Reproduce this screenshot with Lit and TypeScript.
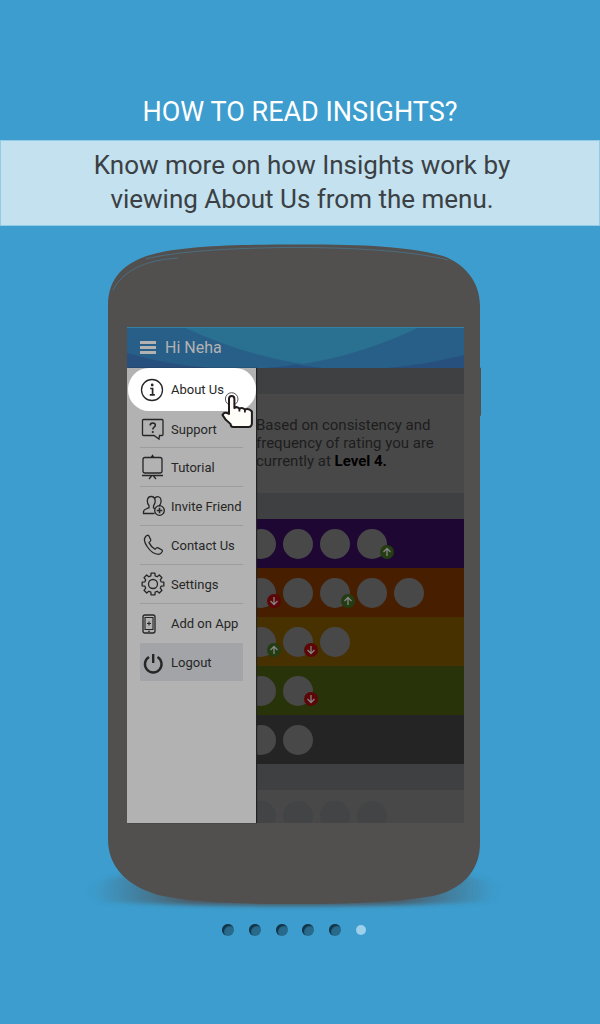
import { LitElement, html, css, svg } from "lit";
import { customElement } from "lit/decorators.js";

// Outline of a cog with eight blunt teeth around (13, 14).
const cog = (() => {
  const points: string[] = [];
  for (let tooth = 0; tooth < 8; tooth++) {
    for (const [radius, offset] of [[8.4, -15], [11, -10], [11, 10], [8.4, 15]]) {
      const angle = ((tooth * 45 + offset) * Math.PI) / 180;
      points.push(`${(13 + radius * Math.cos(angle)).toFixed(2)} ${(14 + radius * Math.sin(angle)).toFixed(2)}`);
    }
  }
  return `M${points.join("L")}Z`;
})();

const icons = {
  info: svg`<circle cx="12" cy="14" r="10.5"/><path d="M10.200 12.500h2.400v6M9.800 18.800h5" stroke-width="1.7"/><circle cx="12.200" cy="9" r="1.400" fill="currentColor" stroke="none"/>`,
  support: svg`<path d="M3.500 4.500h18.500q1 0 1 1v14q0 1-1 1h-2.500l-.5 3.500-5-3.500H3.500q-1 0-1-1v-14q0-1 1-1z"/><path d="M10.200 10.500q0-2.500 2.600-2.500t2.500 2.300q0 1.300-1.400 2.100-1.100.7-1.100 2.200" stroke-width="1.600"/><circle cx="12.800" cy="17" r="1.100" fill="currentColor" stroke="none"/>`,
  tutorial: svg`<rect x="3" y="4.500" width="19" height="15.500" rx="2"/><path d="M2 22.500h21M11.500 23L9 26M13.500 23l2.500 3M11.500 4l1-1.500 1 1.500z"/>`,
  invite: svg`<path d="M14.500 6.500q2-2.500 4.500-1.500 2.500 1 2 5-.3 2-1.500 3.500v1M14.500 21.500H3.500q-.5-3.500 2.500-4.500l3-1.300v-2.200Q7.300 11.500 7.300 9 7.500 4.500 11.200 4.500t4 4.500q0 2.700-1.700 4.900v2l1.500.8"/><circle cx="19.500" cy="18.500" r="4.800"/><path d="M19.500 15.700v5.600M16.700 18.500h5.600" stroke-width="1.600"/>`,
  contact: svg`<path d="M4.500 7.500q1-2.800 3.300-3.300l1 .5 2 4.300q.2 1-1.800 2.600 2 4.200 6 6.600 1.700-1.900 2.700-1.600l4.300 2.400q.6.600.3 1.500-1.200 2.400-3.600 2.800Q12 23 7.500 16 4 11 4.500 7.500z"/>`,
  settings: svg`<circle cx="13" cy="14" r="4.500"/><path d=${cog} stroke-linejoin="round"/>`,
  add: svg`<rect x="3" y="5" width="12" height="18" rx="2"/><path d="M5 7.500h8v12H5zM9 11.500v4M7 13.500h4M8 21.300h2" stroke-width="1.100"/>`,
  logout: svg`<path d="M9 9a8.300 8.300 0 1 0 8.500 0M13.200 6v9" stroke-width="2.400"/>`,
};

const items: { id: keyof typeof icons; label: string }[] = [
  { id: "info", label: "About Us" },
  { id: "support", label: "Support" },
  { id: "tutorial", label: "Tutorial" },
  { id: "invite", label: "Invite Friend" },
  { id: "contact", label: "Contact Us" },
  { id: "settings", label: "Settings" },
  { id: "add", label: "Add on App" },
  { id: "logout", label: "Logout" },
];

const levels: { tone: string; marks: string[] }[] = [
  { tone: "violet", marks: ["", "", "", "up"] },
  { tone: "orange", marks: ["down", "", "up", "", ""] },
  { tone: "amber", marks: ["up", "down", ""] },
  { tone: "green", marks: ["", "down"] },
  { tone: "grey", marks: ["", ""] },
];

@customElement("app-root")
export class AppRoot extends LitElement {
  static styles = css`
    :host {
      display: block;
      min-height: 100vh;
      background: #3c9dce;
      font-family: Roboto, "Liberation Sans", sans-serif;
    }
    * { box-sizing: border-box; }
    .page { display: flex; flex-direction: column; align-items: center; padding-top: 94px; }
    h1 { margin: 0 0 10px; font-size: 27px; line-height: 36px; font-weight: 400; color: #fff; text-align: center; }
    .banner {
      width: 100%;
      padding: 7px 14px 9px 18px;
      border: 1px solid #93cbe6;
      background: #c3e1ef;
      color: #3b4044;
      text-align: center;
    }
    .banner p { max-width: 440px; margin: 0 auto; font-size: 26px; line-height: 34px; }
    .phone {
      position: relative;
      width: 62%;
      min-width: 373px;
      margin: 18px 11px 0 0;
      padding: 83px 17px 82px 19px;
    }
    .shell { position: absolute; inset: 0; width: 100%; height: 100%; overflow: visible; }
    .screen { position: relative; background: #484848; }
    .bar {
      position: relative;
      display: flex;
      align-items: center;
      gap: 9px;
      height: 41px;
      padding-left: 13px;
      background: #27507f;
      color: #b2b2b2;
      font-size: 16px;
    }
    .waves { position: absolute; inset: 0; width: 100%; height: 100%; }
    .burger { position: relative; display: grid; width: 16px; padding: 0; border: 0; background: none; gap: 2px; }
    .burger i { height: 3px; background: #b2b2b2; }
    .hello { position: relative; }
    .body { display: grid; grid-template-columns: 129px minmax(0, 1fr); }
    .drawer { position: relative; z-index: 1; background: #b2b2b2; box-shadow: 1px 0 1px #222; }
    .item {
      display: flex;
      align-items: center;
      gap: 5px;
      height: 39px;
      margin: 0 13px;
      border-bottom: 1px solid #9c9c9c;
      color: #262626;
      font-size: 13px;
      white-space: nowrap;
      text-decoration: none;
    }
    .icon { flex: none; width: 26px; height: 28px; fill: none; stroke: currentColor; stroke-width: 1.3; }
    .info { position: relative; height: 43px; margin: 0 0 0 1px; padding: 0 12px; border: 0; border-radius: 21px; background: #fff; }
    .support { height: 37px; }
    .add { border: 0; }
    .logout { height: 38px; border: 0; background: #a2a4a8; }
    .cursor { position: absolute; left: 92px; top: 22px; width: 36px; height: 42px; overflow: visible; }
    .content { display: flex; flex-direction: column; overflow: hidden; }
    .strip { height: 26px; background: #3f4041; }
    .note { margin: 0; padding: 22px 0 23px; color: #1d1d1d; font-size: 15px; line-height: 18px; white-space: nowrap; }
    .note b { color: #000; font-weight: 700; }
    .level { display: flex; align-items: center; gap: 7px; height: 49px; }
    .violet { background: #1e0833; }
    .orange { background: #481e00; }
    .amber { background: #483100; }
    .green { background: #29330a; }
    .grey { background: #242424; }
    .disc { position: relative; flex: none; width: 30px; height: 30px; border-radius: 50%; background: #484848; }
    .disc:first-child { margin-left: -10px; }
    .badge { position: absolute; right: -5px; bottom: 0; width: 14px; height: 14px; }
    .violet .badge { right: -7px; }
    .more { display: flex; gap: 7px; height: 33px; padding-top: 11px; overflow: hidden; }
    .more .disc { background: #424446; }
    .dots { display: flex; align-items: center; justify-content: space-between; width: 144px; margin: 19px 12px 0 0; }
    .dot { width: 12px; height: 12px; padding: 0; border: 0; border-radius: 50%; background: #286a8c; box-shadow: inset 2px 2px 1px #123548; }
    .current { width: 10px; height: 10px; background: #9dd0ea; box-shadow: none; }
  `;

  private disc(mark: string) {
    return html`<span class="disc">${mark
      ? html`<svg class="badge" viewBox="0 0 14 14" role="img" aria-label=${mark}>
          <circle cx="7" cy="7" r="7" fill=${mark === "up" ? "#243c12" : "#5c0608"}/>
          <path d=${mark === "up" ? "M7 11V3.500M3.500 7L7 3.500 10.500 7" : "M7 3v7.500M3.500 7L7 10.500 10.500 7"} fill="none" stroke="#858585" stroke-width="1.300"/>
        </svg>`
      : ""}</span>`;
  }

  render() {
    return html`<main class="page">
      <h1>HOW TO READ INSIGHTS?</h1>
      <section class="banner"><p>Know more on how Insights work by viewing About Us from the menu.</p></section>
      <section class="phone">
        <svg class="shell" viewBox="0 0 373 662" preserveAspectRatio="none" aria-hidden="true">
          <defs>
            <linearGradient id="fade"><stop offset="0" stop-color="#4b5c66" stop-opacity="0"/><stop offset=".25" stop-color="#4b5c66"/><stop offset=".75" stop-color="#4b5c66"/><stop offset="1" stop-color="#4b5c66" stop-opacity="0"/></linearGradient>
            <filter id="soft" x="-10%" y="-60%" width="120%" height="220%"><feGaussianBlur stdDeviation="6 2"/></filter>
          </defs>
          <path d="M-16 645Q0 634 20 632H352Q375 634 388 645L380 659Q290 663 186 663T-8 659Z" fill="url(#fade)" filter="url(#soft)"/>
          <path d="M0 62C0 34 16 19 42 11C76 1 140 .5 187 .5C240 .5 295 1 335 12C357 20 372 38 372 62V124H373V172H372V600C372 630 352 647 325 653C285 660 235 661 186 661C137 661 87 660 50 652C20 643 0 625 0 596Z" fill="#524f4f"/>
          <path d="M5 46Q20 17 70 14M38 15C90 1 270-2 340 16" fill="none" stroke="#47758c" stroke-width=".8"/>
        </svg>
        <div class="screen">
          <header class="bar">
            <svg class="waves" viewBox="0 0 337 41" preserveAspectRatio="none" aria-hidden="true">
              <path d="M0 0V26C90 52 190 48 293 0ZM56 0C150 48 240 52 337 28V0Z" fill="#285f88"/>
              <path d="M56 0Q116 28 176 37Q234 28 293 0Z" fill="#2a7091"/>
              <path d="M0 .5H337" stroke="#347fa5"/>
            </svg>
            <button class="burger" aria-label="Menu"><i></i><i></i><i></i></button>
            <span class="hello">Hi Neha</span>
          </header>
          <div class="body">
            <nav class="drawer">
              ${items.map(
                (item) => html`<a class="item ${item.id}" href="#"><svg class="icon" viewBox="0 0 26 28" aria-hidden="true">${icons[item.id]}</svg>${item.label}${item.id === "info"
                  ? html`<svg class="cursor" viewBox="0 0 36 42" aria-hidden="true">
                      <circle cx="11.700" cy="9" r="6.300" fill="#fff" stroke="#555" stroke-width="1"/>
                      <path d="M9 9q0-3 2.700-3t2.700 3v9q2-2 5 .5 3-1.500 5.500 1 4-1.500 7 2V33q0 4-3.500 4H13q-2 0-2.500-3Q5 30 2.500 25q2-4 6.500-1z" fill="#fffdf7" stroke="#211a1c" stroke-width="2" stroke-linejoin="round"/>
                      <path d="M19.400 18v3.500M24.900 19.500v3" fill="none" stroke="#211a1c" stroke-width="1.800"/>
                    </svg>`
                  : ""}</a>`
              )}
            </nav>
            <div class="content">
              <div class="strip"></div>
              <p class="note">Based on consistency and<br>frequency of rating you are<br>currently at <b>Level 4.</b></p>
              <div class="strip"></div>
              ${levels.map((level) => html`<div class="level ${level.tone}">${level.marks.map((mark) => this.disc(mark))}</div>`)}
              <div class="strip"></div>
              <div class="more">${["", "", "", ""].map((mark) => this.disc(mark))}</div>
            </div>
          </div>
        </div>
      </section>
      <nav class="dots" aria-label="Tutorial pages">
        ${[1, 2, 3, 4, 5, 6].map((page) => html`<button class="dot ${page === 6 ? "current" : ""}" aria-label="Page ${page}"></button>`)}
      </nav>
    </main>`;
  }
}
